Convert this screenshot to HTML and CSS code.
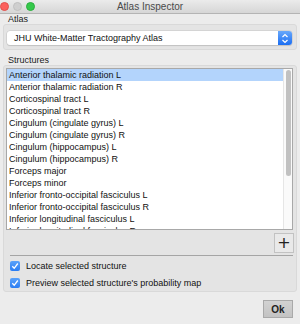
FILE: index.html
```html
<!DOCTYPE html>
<html lang="en">
<head>
    <meta charset="UTF-8">
    <title>Atlas Inspector</title>
    <link rel="stylesheet" href="styles.css">
</head>
<body>
    <div class="window">
        <div class="titlebar">
            <div class="lights">
                <div class="light light-red"></div>
                <div class="light light-gray"></div>
                <div class="light light-green"></div>
            </div>
            <div class="title">Atlas Inspector</div>
            <div></div>
        </div>

        <div class="content">
            <div class="group-title">Atlas</div>
            <div class="group atlas-group">
                <div class="combo">
                    <span class="combo-text">JHU White-Matter Tractography Atlas</span>
                    <span class="combo-arrows">
                        <svg width="8" height="11" viewBox="0 0 8 11">
                            <path d="M1.5 4 L4 1.5 L6.5 4 M1.5 7 L4 9.5 L6.5 7" fill="none" stroke="#fff" stroke-width="1.2"/>
                        </svg>
                    </span>
                </div>
            </div>

            <div class="group-title structures-title">Structures</div>
            <div class="group structures-group">
                <div class="list">
                    <ul class="items">
                        <li class="selected">Anterior thalamic radiation L</li>
                        <li>Anterior thalamic radiation R</li>
                        <li>Corticospinal tract L</li>
                        <li>Corticospinal tract R</li>
                        <li>Cingulum (cingulate gyrus) L</li>
                        <li>Cingulum (cingulate gyrus) R</li>
                        <li>Cingulum (hippocampus) L</li>
                        <li>Cingulum (hippocampus) R</li>
                        <li>Forceps major</li>
                        <li>Forceps minor</li>
                        <li>Inferior fronto-occipital fasciculus L</li>
                        <li>Inferior fronto-occipital fasciculus R</li>
                        <li>Inferior longitudinal fasciculus L</li>
                        <li>Inferior longitudinal fasciculus R</li>
                    </ul>
                    <div class="scrollbar">
                        <div class="thumb"></div>
                    </div>
                </div>
                <div class="list-tools">
                    <button class="plus-btn">+</button>
                </div>
                <div class="separator"></div>
                <div class="check-row">
                    <span class="checkbox">
                        <svg width="8" height="8" viewBox="0 0 8 8">
                            <path d="M1.3 4.3 L3.2 6.3 L6.8 1.5" fill="none" stroke="#fff" stroke-width="1.3"/>
                        </svg>
                    </span>
                    <span>Locate selected structure</span>
                </div>
                <div class="check-row">
                    <span class="checkbox">
                        <svg width="8" height="8" viewBox="0 0 8 8">
                            <path d="M1.3 4.3 L3.2 6.3 L6.8 1.5" fill="none" stroke="#fff" stroke-width="1.3"/>
                        </svg>
                    </span>
                    <span>Preview selected structure's probability map</span>
                </div>
            </div>

            <div class="buttons">
                <button class="ok-btn">Ok</button>
            </div>
        </div>
    </div>
</body>
</html>
```

FILE: styles.css
```css
body {
    margin: 0;
    font-family: "Liberation Sans", Arial, sans-serif;
    font-size: 9px;
    color: #111;
}
.window {
    width: 300px;
    height: 324px;
    background-color: #ececec;
    overflow: hidden;
}
.titlebar {
    height: 13px;
    display: grid;
    grid-template-columns: 1fr auto 1fr;
    align-items: center;
    background: linear-gradient(#ebebeb, #d6d6d6);
    border-bottom: 1px solid #b4b4b4;
}
.lights {
    display: flex;
    align-items: center;
    gap: 4px;
    height: 13px;
}
.light {
    width: 9px;
    height: 9px;
    border-radius: 50%;
    box-sizing: border-box;
}
.light-red {
    background-color: #fc605c;
    border: 1px solid #e0514d;
}
.light-gray {
    background-color: #cfcfcf;
    border: 1px solid #c0c0c0;
}
.light-green {
    background-color: #35c94b;
    border: 1px solid #2bae3e;
}
.title {
    color: #4a4a4a;
    font-size: 10px;
}
.content {
    padding: 1px 3px 0 3px;
}
.group-title {
    padding-left: 5px;
    height: 9px;
    line-height: 9px;
    color: #1a1a1a;
}
.group {
    background-color: #e4e4e4;
    border: 1px solid #d9d9d9;
    border-radius: 3px;
}
.atlas-group {
    padding: 6px 4px 4px 3px;
}
.combo {
    height: 14px;
    display: flex;
    align-items: center;
    background-color: #fff;
    border-radius: 3px;
    box-shadow: 0 0 0 0.5px #c4c4c4, 0 1px 1px rgba(0, 0, 0, 0.15);
}
.combo-text {
    flex: 1;
    padding-left: 7px;
    color: #111;
}
.combo-arrows {
    width: 14px;
    height: 14px;
    display: flex;
    align-items: center;
    justify-content: center;
    background: linear-gradient(#68a8fb, #1c6ef2);
    border-radius: 0 3px 3px 0;
}
.structures-title {
    margin-top: 6px;
}
.structures-group {
    padding: 2px 3px 3px 2px;
}
.list {
    height: 160px;
    display: flex;
    background-color: #fff;
    border: 1px solid #a8a8a8;
    overflow: hidden;
}
.items {
    flex: 1;
    list-style: none;
    margin: 0;
    padding: 0;
}
.items li {
    height: 12px;
    line-height: 12px;
    padding-left: 2px;
    white-space: nowrap;
}
.items li.selected {
    background-color: #b3d4fc;
}
.scrollbar {
    width: 9px;
    border-left: 1px solid #e6e6e6;
    background-color: #fafafa;
    padding: 1px 0 0 2px;
    box-sizing: border-box;
}
.thumb {
    width: 5px;
    height: 106px;
    border-radius: 3px;
    background-color: #c1c1c1;
}
.list-tools {
    display: flex;
    justify-content: flex-end;
    padding-top: 3px;
}
.plus-btn {
    width: 20px;
    height: 20px;
    padding: 0;
    margin: 0 -1px 0 0;
    background-color: #e9e9e9;
    border: 1px solid #c2c2c2;
    font-family: "DejaVu Sans", sans-serif;
    font-size: 16px;
    line-height: 16px;
    color: #222;
}
.separator {
    height: 1px;
    background-color: #a5a5a5;
    margin: 2px 0 5px 4px;
}
.check-row {
    display: flex;
    align-items: center;
    gap: 6px;
    height: 10px;
    padding-left: 4px;
    margin-bottom: 7px;
}
.check-row:last-child {
    margin-bottom: 0;
}
.checkbox {
    width: 10px;
    height: 10px;
    border-radius: 2px;
    background: linear-gradient(#5aa2fa, #2a7df3);
    display: flex;
    align-items: center;
    justify-content: center;
}
.buttons {
    display: flex;
    justify-content: flex-end;
    padding: 8px 4px 0 0;
}
.ok-btn {
    width: 30px;
    height: 18px;
    padding: 0;
    margin: 0;
    background: linear-gradient(#d2d2d2, #c3c3c3);
    border: 1px solid #a9a9a9;
    font-family: "Liberation Sans", Arial, sans-serif;
    font-size: 10px;
    font-weight: bold;
    color: #222;
}
```
